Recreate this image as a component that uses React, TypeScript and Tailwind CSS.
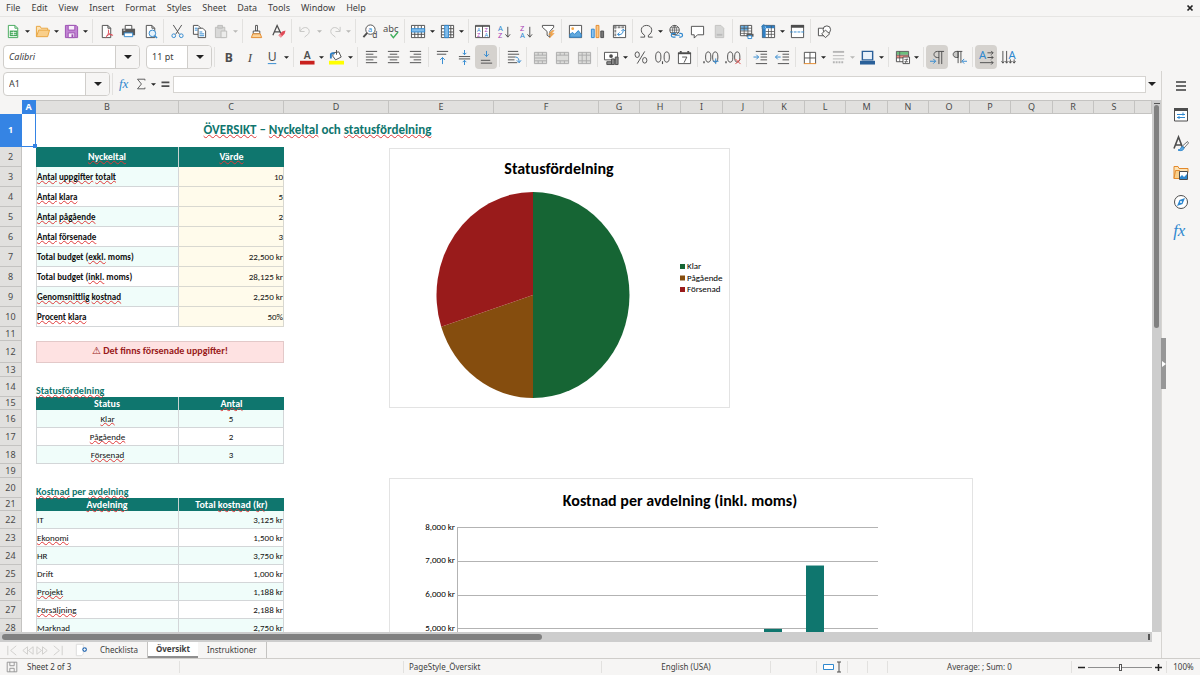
import { Fragment, type ReactNode } from 'react';
import clsx from 'clsx';

const INK = '#4d4d4d';
const BLUE = '#2f88cf';

/* ---------- icons (16 x 16 grid) ---------- */

const page = <path d="M3.5 1.5h6l3 3v10h-9z M9.5 1.5v3h3" fill="#fdfdfd" stroke={INK} />;

const hlines = (rows: number[][], color = INK) => (
  <path d={rows.map(([x1, x2, y]) => `M${x1} ${y}H${x2}`).join(' ')} stroke={color} fill="none" />
);

const icons: Record<string, ReactNode> = {
  new: (
    <>
      <path d="M2.5 1.5h7l3 3v10h-10z" fill="#fff" stroke="#43a85a" />
      <path d="M9.5 1.5v3h3" fill="none" stroke="#43a85a" />
      <path d="M4 7h8v6H4z" fill="#43a85a" />
      <path d="M5 9h6 M5 11h6 M8 8v4" stroke="#fff" strokeWidth=".8" />
    </>
  ),
  open: (
    <>
      <path d="M1.5 13.5v-11h4l1 2h7v3" fill="#fce3b6" stroke="#e8a33d" />
      <path d="M1.5 13.5l2.5-7h11.5l-2 7z" fill="#f9cf8b" stroke="#e8a33d" />
    </>
  ),
  save: (
    <>
      <path d="M1.5 1.5h11.5l1.5 1.5v11.5h-13z" fill="#c283d4" stroke="#9b4fb0" />
      <path d="M4.5 1.5h7v5h-7z" fill="#f7eefa" stroke="#9b4fb0" />
      <path d="M4.5 9.5h7v5h-7z" fill="#f7eefa" stroke="#9b4fb0" />
      <path d="M9 11v3" stroke="#9b4fb0" strokeWidth="2" />
    </>
  ),
  pdf: (
    <>
      {page}
      <path d="M10 6c1 4-1 7-3 8.5M10 9c1 2 3 3 5 3M8 12.5c2-1.5 4-1.5 6-1" fill="none" stroke="#dc4a55" />
    </>
  ),
  print: (
    <>
      <path d="M4.5 5.5v-4h7v4" fill="#fff" stroke={INK} />
      <path d="M1 5h14v7H1z" fill="#5a5a5a" />
      <path d="M3.5 9.5h9v4h-9z" fill="#fff" stroke={BLUE} />
      <path d="M2.5 6.5h2" stroke="#fff" />
    </>
  ),
  preview: (
    <>
      {page}
      <circle cx="10" cy="10" r="3.5" fill="#e6f2fb" stroke={BLUE} />
      <path d="M12.5 12.5l2.5 2.5" stroke={BLUE} strokeWidth="1.5" />
    </>
  ),
  cut: (
    <>
      <path d="M3.5 1l6.5 10M12.5 1L6 11" stroke={INK} fill="none" />
      <circle cx="4" cy="12.5" r="2" fill="none" stroke={BLUE} />
      <circle cx="12" cy="12.5" r="2" fill="none" stroke={BLUE} />
    </>
  ),
  copy: (
    <>
      <path d="M1.5 1.5h5l2.5 2.5v7h-7.5z" fill="#fff" stroke={INK} />
      <path d="M6.5 4.5h5l3 3v7h-8z" fill="#fff" stroke={INK} />
      {hlines([[3, 6, 4.5], [3, 6, 6.5], [8, 11, 8.5], [8, 13, 10.5], [8, 13, 12.5]], BLUE)}
    </>
  ),
  paste: (
    <>
      <path d="M1.5 3.5h10v11h-10z" fill="#d9d9d8" stroke="#bdbdbb" />
      <path d="M4 1.5h5v3H4z" fill="#d0d0cf" stroke="#bdbdbb" />
      <path d="M7.5 7.5h6v7h-6z" fill="#ececeb" stroke="#bdbdbb" />
    </>
  ),
  clone: (
    <>
      <path d="M7 1.5h2v6H7z" fill="#fff" stroke={INK} />
      <path d="M4.5 7.5h7v3h-7z" fill="#fff" stroke={INK} />
      <path d="M4 10.5h8l1.5 4h-11z" fill="#fbd39a" stroke="#e3892b" />
    </>
  ),
  clear: (
    <>
      <path d="M2 12L6.5 1.5 10.5 10M3.5 8.5h6" fill="none" stroke={INK} strokeWidth="1.3" />
      <path d="M8 12l4-4 3.5-1-1 3.5-4 4z" fill="#e14b57" />
      <path d="M8 12l1.5-1.5 2.5 2.5-1.5 1.5z" fill="#f29aa1" />
    </>
  ),
  undo: <path d="M2 3v5h5M2.5 7.5C5 2 12 3 12 8c0 3-3 4-5 6" fill="none" stroke="#c5c5c3" />,
  redo: <path d="M14 3v5H9M13.5 7.5C11 2 4 3 4 8c0 3 3 4 5 6" fill="none" stroke="#c5c5c3" />,
  find: (
    <>
      <circle cx="9" cy="6" r="5" fill="#fff" stroke={INK} />
      <path d="M5.5 9.5L1.5 14" stroke={INK} strokeWidth="2" />
      <text x="6.5" y="8.5" fontSize="8" fill={BLUE}>a</text>
      <text x="11" y="15" fontSize="9" fill={INK}>d</text>
    </>
  ),
  spell: (
    <>
      <text x="-1" y="8" fontSize="10" fill={INK}>abc</text>
      <path d="M7 11l3 3.5 5-6" fill="none" stroke="#3fae5c" strokeWidth="1.5" />
    </>
  ),
  row: (
    <>
      <path d="M.5 1.5h14v13H.5z" fill="#fff" stroke={INK} />
      <path d="M4 2v12M7.5 2v12M11 2v12M1 11h13" stroke={INK} />
      <path d="M.5 5h14v3.5H.5z" fill="#83bdea" stroke={BLUE} />
    </>
  ),
  col: (
    <>
      <path d="M1.5 1.5h13v13h-13z" fill="#fff" stroke={INK} />
      <path d="M2 5h12M2 8.5h12M2 11.5h12M11.5 2v12" stroke={INK} />
      <path d="M5 1.5h4v13H5z" fill="#83bdea" stroke={BLUE} />
    </>
  ),
  sort: (
    <>
      <path d="M.5 1.5h15v13H.5z" fill="#fff" stroke={INK} />
      <path d="M0 2.5h16M8 2v12" stroke={INK} />
      <text x="2" y="8.5" fontSize="6" fill={BLUE}>A</text>
      <text x="2" y="14" fontSize="6" fill="#a63fb5">Z</text>
      <text x="10" y="8.5" fontSize="6" fill="#a63fb5">Z</text>
      <text x="10" y="14" fontSize="6" fill={BLUE}>A</text>
    </>
  ),
  asc: (
    <>
      <text x="1" y="7" fontSize="8" fill={BLUE}>A</text>
      <text x="1" y="15" fontSize="8" fill="#a63fb5">Z</text>
      <path d="M11.5 3v11M9 11l2.5 3 2.5-3" fill="none" stroke={INK} />
    </>
  ),
  desc: (
    <>
      <text x="1" y="7" fontSize="8" fill="#a63fb5">Z</text>
      <text x="1" y="15" fontSize="8" fill={BLUE}>A</text>
      <path d="M11.5 3v11M9 11l2.5 3 2.5-3" fill="none" stroke={INK} />
    </>
  ),
  filter: (
    <>
      <path d="M1.5 1.5h12v2L9.5 8v6l-3-2V8l-5-4.5z" fill="#fff" stroke={INK} />
      <path d="M12 7l-4 4h3l-2 4 5-5h-3l3-3z" fill="#f5a94c" stroke="#e3892b" strokeWidth=".5" />
    </>
  ),
  image: (
    <>
      <path d="M1.5 1.5h13v13h-13z" fill="#fff" stroke={INK} />
      <circle cx="5" cy="5" r="1.5" fill="#f5a94c" />
      <path d="M2 14v-3l3-2 2 2 4-4 3 4v3z" fill="#61a8dc" stroke={BLUE} />
    </>
  ),
  chart: (
    <>
      <path d="M1.5 5.5h3v9h-3z" fill="#8cc3ee" stroke={BLUE} />
      <path d="M6.5 1.5h3v13h-3z" fill="#fbc98a" stroke="#e3892b" />
      <path d="M11.5 7.5h3v7h-3z" fill="#777" stroke={INK} />
    </>
  ),
  pivot: (
    <>
      <path d="M1.5 1.5h13v13h-13z" fill="#fff" stroke={INK} />
      <path d="M2 3.5h12M3.5 2v12" stroke="#8a8a8a" strokeWidth="2" strokeDasharray="3 1" />
      <path d="M6 11c4 1 6-1 6-5M10 7.5l2-2 2 2M8 9l-2 2 2 2" fill="none" stroke={BLUE} />
    </>
  ),
  omega: <path d="M1.5 14h4.500v-2C.5 9 1.5 1.5 8 1.5S15.5 9 10 12v2h4.500" fill="none" stroke={INK} />,
  link: (
    <>
      <circle cx="7" cy="6.5" r="5" fill="#fff" stroke={INK} />
      <path d="M2 6.5h10M7 1.5v10M3 4h8M3 9h8M7 1.5c-3 3-3 7 0 10 3-3 3-7 0-10" fill="none" stroke={INK} strokeWidth=".7" />
      <path d="M8 10H5.5a2 2 0 000 4H8M12 10h1.5a2 2 0 010 4H12M7.5 12h5" fill="none" stroke={BLUE} strokeWidth="1.3" />
    </>
  ),
  comment: <path d="M1.5 2.5h13v9H8L4.5 15v-3.5h-3z" fill="#fff" stroke={INK} />,
  header: (
    <>
      <path d="M3.5 1.5h6l3 3v10h-9z" fill="#d6d6d5" stroke="#c2c2c0" />
      <path d="M5 11.5h6" stroke="#bbb" strokeWidth="2" />
    </>
  ),
  printArea: (
    <>
      <path d="M1.5 1.5h12v11h-12z" fill="#fff" stroke={INK} />
      <path d="M2 2h8v5H2z" fill="#68aee3" />
      <path d="M1.5 4.5h12M1.5 7.5h12M1.5 10h12M5.5 1.5v11M9.5 1.5v11" stroke={INK} strokeWidth=".8" />
      <path d="M8 10.5h7.5v3H8z" fill="#5a5a5a" />
      <path d="M9.5 12.5h4v3h-4z" fill="#fff" stroke={BLUE} />
    </>
  ),
  freeze: (
    <>
      <path d="M1.5 1.5h13v13h-13z" fill="#fff" stroke={INK} />
      <path d="M5 1.5h9.5v3H5zM1.5 4.5H5v10H1.5z" fill="#2f7fc4" />
      <path d="M5 8h9M5 11h9M8 5v9M11 2v12" stroke={INK} strokeWidth=".8" />
      <path d="M3 0v6M0 3h6M1 1l4 4M5 1L1 5" stroke={BLUE} />
    </>
  ),
  split: (
    <>
      <path d="M1.5 1.5h13v13h-13z" fill="#fff" stroke={INK} />
      <path d="M1 2.5h14" stroke={INK} strokeWidth="3" />
      <path d="M0 8.5h16" stroke={BLUE} strokeDasharray="3 1" />
    </>
  ),
  shapes: (
    <>
      <path d="M1.5 4.5h7v8h-7z" fill="#fff" stroke={INK} />
      <circle cx="10.5" cy="6" r="4" fill="#fff" stroke={INK} />
      <path d="M9 6.5l4.5 4L9 14.5 5 10.5z" fill="#f5f4f2" stroke={INK} />
    </>
  ),
  bold: <text x="4" y="13" fontSize="13" fontWeight="700" fill={INK}>B</text>,
  italic: <text x="5" y="13" fontSize="14" fontStyle="italic" fontFamily="Liberation Serif" fill={INK}>I</text>,
  underline: (
    <>
      <text x="3" y="12" fontSize="13" fill={INK}>U</text>
      <path d="M3 14.5h9" stroke={BLUE} />
    </>
  ),
  fontColor: (
    <>
      <text x="4" y="10" fontSize="11" fontWeight="600" fill={INK}>A</text>
      <path d="M0 13.5h15.5" stroke="#c9211e" strokeWidth="4" />
    </>
  ),
  highlight: (
    <>
      <path d="M4.5 3l6-1 2.5 5.5-6 3-3-4z" fill="#fff" stroke={INK} />
      <path d="M2 9V4.5c1-2 3-1 4-.5" fill="none" stroke="#2f7fc4" strokeWidth="2" />
      <path d="M8 0v5" stroke={INK} />
      <path d="M0 13.5h16" stroke="#ff0" strokeWidth="4" />
    </>
  ),
  alignL: hlines([[2, 14, 1.5], [2, 10, 4.5], [2, 14, 7.5], [2, 10, 10.5], [2, 14, 13.5]]),
  alignC: hlines([[2, 14, 1.5], [4, 12, 4.5], [2, 14, 7.5], [4, 12, 10.5], [2, 14, 13.5]]),
  alignR: hlines([[2, 14, 1.5], [6, 14, 4.5], [2, 14, 7.5], [6, 14, 10.5], [2, 14, 13.5]]),
  top: (
    <>
      {hlines([[2, 14, 1.5], [2, 12, 4.5]])}
      <path d="M8 15V8M5.5 10.5L8 8l2.5 2.5" fill="none" stroke={BLUE} />
    </>
  ),
  middle: (
    <>
      {hlines([[2, 14, 7], [2, 14, 9.5]])}
      <path d="M8 0v5M6 3l2 2 2-2M8 16v-5M6 13l2-2 2 2" fill="none" stroke={BLUE} />
    </>
  ),
  bottom: (
    <>
      {hlines([[2, 12, 11], [2, 14, 14]])}
      <path d="M8 1v6M5.5 4.5L8 7l2.5-2.5" fill="none" stroke={BLUE} />
    </>
  ),
  wrap: (
    <>
      {hlines([[2, 13, 1.5], [2, 14, 4.5], [2, 10, 7.5], [2, 9, 10.5], [2, 12, 13.5]])}
      <path d="M10 7.5c3 0 4 2 4 6M11.5 11l2.5 2.5 2-2.5" fill="none" stroke={BLUE} />
    </>
  ),
  merge: (
    <>
      <path d="M1.5 2.5h13v12h-13z" fill="#dcdcda" stroke="#ababab" />
      <path d="M1.5 5.5h13M1.5 11.5h13M5.5 2.5v3M10 2.5v3M5.5 11.5v3M10 11.5v3M1.5 8.5h13" stroke="#ababab" />
    </>
  ),
  mergeOne: (
    <>
      <path d="M1.5 2.5h13v12h-13z" fill="#dcdcda" stroke="#ababab" />
      <path d="M1.5 5.5h13M1.5 11.5h13M5.5 2.5v3M10 2.5v3M5.5 11.5v3M10 11.5v3" stroke="#ababab" />
    </>
  ),
  unmerge: (
    <>
      <path d="M1.5 2.5h13v12h-13z" fill="#dcdcda" stroke="#ababab" />
      <path d="M1.5 5.5h13M1.5 11.5h13M5.5 2.5v12M10 2.5v12" stroke="#ababab" />
    </>
  ),
  currency: (
    <>
      <path d="M.5 2.5h14v8H.5z" fill="#fff" stroke={INK} />
      <circle cx="7.5" cy="6.5" r="2" fill={INK} />
      <path d="M3 12.5h5v3H3zM8 9.5h3v6H8zM12 7.5h3v8h-3z" fill="#8c8c8c" stroke={INK} />
    </>
  ),
  percent: (
    <>
      <ellipse cx="4.5" cy="5" rx="2.3" ry="3" fill="none" stroke={INK} />
      <ellipse cx="12.5" cy="11" rx="2.3" ry="3" fill="none" stroke={INK} />
      <path d="M12.5 1.5l-8 13" stroke={INK} />
    </>
  ),
  number: (
    <>
      <ellipse cx="3.5" cy="7.5" rx="2.8" ry="5.5" fill="none" stroke={INK} />
      <ellipse cx="12.5" cy="7.5" rx="2.8" ry="5.5" fill="none" stroke={INK} />
      <path d="M8 12v3" stroke={INK} strokeWidth="1.2" />
    </>
  ),
  date: (
    <>
      <path d="M1.5 3.5h13v11h-13z" fill="#fff" stroke={INK} />
      <path d="M1 3.5h14" stroke={INK} strokeWidth="2" />
      <path d="M4 1v2M12 1v2" stroke={INK} strokeWidth="2" />
      <path d="M5.5 7.5h5l-3 6" fill="none" stroke={INK} />
    </>
  ),
  addDec: (
    <>
      <path d="M0 12v2" stroke={INK} strokeWidth="1.5" />
      <ellipse cx="4.5" cy="7.5" rx="2.8" ry="5.5" fill="none" stroke={INK} />
      <ellipse cx="12" cy="7.5" rx="2.8" ry="5.5" fill="none" stroke={INK} />
      <path d="M12.5 9v6M9.5 12h6" stroke={BLUE} />
    </>
  ),
  delDec: (
    <>
      <path d="M0 12v2" stroke={INK} strokeWidth="1.5" />
      <ellipse cx="4.5" cy="7.5" rx="2.8" ry="5.5" fill="none" stroke={INK} />
      <ellipse cx="12" cy="7.5" rx="2.8" ry="5.5" fill="none" stroke={INK} />
      <path d="M10 9.5l5.5 5.5M15.5 9.5L10 15" stroke="#e04848" />
    </>
  ),
  indent: (
    <>
      {hlines([[3, 15, 1.5], [8, 15, 4.5], [8, 15, 7.5], [8, 15, 10.5], [3, 15, 14.5]])}
      <path d="M.5 7.5h5.5M3.5 5L6 7.5 3.5 10" fill="none" stroke={BLUE} />
    </>
  ),
  outdent: (
    <>
      {hlines([[3, 15, 1.5], [8, 15, 4.5], [8, 15, 7.5], [8, 15, 10.5], [3, 15, 14.5]])}
      <path d="M6 7.5H.5M3 5L.5 7.5 3 10" fill="none" stroke={BLUE} />
    </>
  ),
  borders: (
    <>
      <path d="M2.5 14.5v-12h12v12M8.5 2.5v12M2.5 8.5h12" fill="#fff" stroke={INK} />
      <path d="M2 14.5h13" stroke="#e3892b" />
    </>
  ),
  lineStyle: (
    <>
      <path d="M2 2h12" stroke="#b5b5b5" strokeWidth="2" />
      <path d="M2 6h12M2 9.5h12" stroke="#b5b5b5" />
      <path d="M2 13h12" stroke="#b5b5b5" strokeDasharray="2 1" strokeWidth="2" />
    </>
  ),
  borderColor: (
    <>
      <path d="M2.5 1.5h11v9h-11z" fill="#e8f1fa" stroke="#2a6099" strokeWidth="1.5" />
      <path d="M0 13.5h16" stroke="#2a6099" strokeWidth="4" />
    </>
  ),
  conditional: (
    <>
      <path d="M1.5 1.5h13v11h-13z" fill="#fff" stroke={INK} />
      <path d="M2 2h12v3H2z" fill="#6bbf7c" />
      <path d="M2 5.5h12v3H2z" fill="#ef8b82" />
      <path d="M1.5 5.5h13M1.5 8.5h13M5 1.5v11" stroke={INK} strokeWidth=".8" />
      <path d="M8.5 7.5h7v7h-7z" fill="#fff" stroke={INK} />
      <path d="M10 10h4M10 12.5h4M13 9l-2 5" stroke={INK} strokeWidth=".8" />
    </>
  ),
  ltr: (
    <>
      <path d="M9.5 15V1.5M12.5 15V1.5M15 1.5H8C3 1.5 3 8 8 8h1.5" fill="none" stroke={INK} />
      <path d="M0 12h6M3.5 9.5L6 12l-2.5 2.5" fill="none" stroke={BLUE} />
    </>
  ),
  rtl: (
    <>
      <path d="M6.5 1.5H5C0 1.5 0 8 5 8h1.5z" fill="#c9c9c7" stroke={INK} />
      <path d="M6.5 14V1.5M9.5 14V1.5M5 1.5h6" fill="none" stroke={INK} />
      <path d="M16 12h-5M13 9.5L10.5 12l2.5 2.5" fill="none" stroke={BLUE} />
    </>
  ),
  textLR: (
    <>
      <text x="0" y="10" fontSize="12" fill={BLUE}>A</text>
      <path d="M9 3h6M9 8h6M1 13.5h14M13 1l2 2-2 2M13 6l2 2-2 2M13 11.5l2 2-2 2" fill="none" stroke={INK} />
    </>
  ),
  textTB: (
    <>
      <path d="M2 1v13M6 1v13M10 10v4M14 10v4M.5 12L2 14l1.5-2M4.5 12L6 14l1.5-2M8.5 12l1.5 2 1.5-2M12.5 12l1.5 2 1.5-2" fill="none" stroke={INK} />
      <text x="8" y="10" fontSize="12" fill={BLUE}>A</text>
    </>
  ),
  fx: <text x="1" y="12.5" fontSize="15" fontStyle="italic" fontFamily="Liberation Serif" fill={BLUE}>fx</text>,
  sum: <path d="M12.5 4V2.5H4L8.5 8 4 13.5h8.5V12" fill="none" stroke={INK} />,
  equals: <path d="M4 6h9M4 10.5h9" stroke={INK} strokeWidth="2" />,
  menu: <path d="M3 4h10M3 8h10M3 12h10" stroke="#3d3d3d" strokeWidth="1.5" />,
  properties: (
    <>
      <path d="M1.5 2h13v12h-13z" fill="#fff" stroke={INK} />
      <path d="M1 2.5h14" stroke={INK} strokeWidth="3" />
      <path d="M4 7.5h8M4 10.5h8M10 5.5v3M6 9v3" stroke={BLUE} />
    </>
  ),
  styles: (
    <>
      <path d="M1 12.5L5.5 1 9.5 11.5M2.5 9h6" fill="none" stroke={INK} strokeWidth="1.6" />
      <path d="M9.5 10l5-4.5L15.5 7 11 12z" fill="#fff" stroke={INK} strokeWidth=".8" />
      <path d="M5 14c3 0 2-3 5-3.5l1 1.5c0 2-3 3.5-6 2z" fill="#61a8dc" stroke={BLUE} />
    </>
  ),
  gallery: (
    <>
      <path d="M1 13.5v-12h4l1 2h9v4" fill="#fce3b6" stroke="#e3892b" />
      <path d="M1 13.5l1.5-8h4v8z" fill="#f9cf8b" stroke="#e3892b" />
      <path d="M6.5 6.5h8v8h-8z" fill="#fff" stroke={INK} />
      <path d="M7 14v-2l2-2 2 2 3-3v5z" fill={BLUE} />
    </>
  ),
  navigator: (
    <>
      <circle cx="8" cy="8" r="6.5" fill="#fff" stroke={INK} />
      <path d="M12 4l-2.5 6L4 12l2.5-6z" fill={BLUE} />
      <circle cx="8" cy="8" r="1" fill="#fff" />
    </>
  ),
  addSheet: (
    <>
      <path d="M1.5 1.5h8v11l-2 2h-6z" fill="#fff" stroke="#dadada" />
      <circle cx="11" cy="7.5" r="2.7" fill="#2f6fb5" />
      <path d="M9.5 7.5h3M11 6v3" stroke="#fff" />
    </>
  ),
  docSaved: (
    <>
      <path d="M2.5 2.5h11v11h-11z" fill="none" stroke="#8f8f8f" />
      <path d="M5.5 2.5v4h5v-4M5.5 13.5v-4h5v4" fill="none" stroke="#8f8f8f" />
    </>
  ),
};

function Icon({ name, className }: { name: string; className?: string }) {
  return (
    <svg viewBox="0 0 16 16" className={clsx('shrink-0 overflow-visible', className ?? 'size-4')} aria-hidden="true">
      {icons[name]}
    </svg>
  );
}

function Caret({ dim, large }: { dim?: boolean; large?: boolean }) {
  return (
    <svg viewBox="0 0 8 4" className={clsx('shrink-0', large ? 'h-1 w-2' : 'h-[3px] w-[5px]')} aria-hidden="true">
      <path d="M0 0h8L4 4z" fill={dim ? '#b9b9b7' : '#222'} />
    </svg>
  );
}

/* ---------- toolbars ---------- */

type Tool = { icon: string; label: string; menu?: boolean; dim?: boolean; active?: boolean };

const standardTools: Tool[][] = [
  [
    { icon: 'new', label: 'New', menu: true },
    { icon: 'open', label: 'Open', menu: true },
    { icon: 'save', label: 'Save', menu: true },
  ],
  [
    { icon: 'pdf', label: 'Export as PDF' },
    { icon: 'print', label: 'Print' },
    { icon: 'preview', label: 'Print preview' },
  ],
  [
    { icon: 'cut', label: 'Cut' },
    { icon: 'copy', label: 'Copy' },
    { icon: 'paste', label: 'Paste', menu: true, dim: true },
  ],
  [
    { icon: 'clone', label: 'Clone formatting' },
    { icon: 'clear', label: 'Clear formatting' },
  ],
  [
    { icon: 'undo', label: 'Undo', menu: true, dim: true },
    { icon: 'redo', label: 'Redo', menu: true, dim: true },
  ],
  [
    { icon: 'find', label: 'Find and replace' },
    { icon: 'spell', label: 'Spelling' },
  ],
  [
    { icon: 'row', label: 'Row', menu: true },
    { icon: 'col', label: 'Column', menu: true },
  ],
  [
    { icon: 'sort', label: 'Sort' },
    { icon: 'asc', label: 'Sort ascending' },
    { icon: 'desc', label: 'Sort descending' },
    { icon: 'filter', label: 'AutoFilter' },
  ],
  [
    { icon: 'image', label: 'Insert image' },
    { icon: 'chart', label: 'Insert chart' },
    { icon: 'pivot', label: 'Pivot table' },
  ],
  [
    { icon: 'omega', label: 'Special character', menu: true },
    { icon: 'link', label: 'Hyperlink' },
    { icon: 'comment', label: 'Comment' },
    { icon: 'header', label: 'Headers and footers', dim: true },
  ],
  [
    { icon: 'printArea', label: 'Print area' },
    { icon: 'freeze', label: 'Freeze panes', menu: true },
    { icon: 'split', label: 'Split window' },
  ],
  [{ icon: 'shapes', label: 'Draw functions' }],
];

const formattingTools: Tool[][] = [
  [
    { icon: 'bold', label: 'Bold' },
    { icon: 'italic', label: 'Italic' },
    { icon: 'underline', label: 'Underline', menu: true },
  ],
  [
    { icon: 'fontColor', label: 'Font color', menu: true },
    { icon: 'highlight', label: 'Background color', menu: true },
  ],
  [
    { icon: 'alignL', label: 'Align left' },
    { icon: 'alignC', label: 'Center' },
    { icon: 'alignR', label: 'Align right' },
  ],
  [
    { icon: 'top', label: 'Align top' },
    { icon: 'middle', label: 'Center vertically' },
    { icon: 'bottom', label: 'Align bottom', active: true },
  ],
  [{ icon: 'wrap', label: 'Wrap text' }],
  [
    { icon: 'merge', label: 'Merge and center', dim: true },
    { icon: 'mergeOne', label: 'Merge cells', dim: true },
    { icon: 'unmerge', label: 'Unmerge cells', dim: true },
  ],
  [
    { icon: 'currency', label: 'Currency', menu: true },
    { icon: 'percent', label: 'Percent' },
    { icon: 'number', label: 'Number' },
    { icon: 'date', label: 'Date' },
  ],
  [
    { icon: 'addDec', label: 'Add decimal' },
    { icon: 'delDec', label: 'Delete decimal' },
  ],
  [
    { icon: 'indent', label: 'Increase indent' },
    { icon: 'outdent', label: 'Decrease indent' },
  ],
  [
    { icon: 'borders', label: 'Borders', menu: true },
    { icon: 'lineStyle', label: 'Border style', menu: true, dim: true },
    { icon: 'borderColor', label: 'Border color', menu: true },
  ],
  [{ icon: 'conditional', label: 'Conditional formatting', menu: true }],
  [
    { icon: 'ltr', label: 'Left-to-right', active: true },
    { icon: 'rtl', label: 'Right-to-left' },
  ],
  [
    { icon: 'textLR', label: 'Text direction left to right', active: true },
    { icon: 'textTB', label: 'Text direction top to bottom' },
  ],
];

function Divider() {
  return (
    <div className="flex w-[5px] shrink-0 justify-center self-stretch py-0.5">
      <div className="w-px bg-[#e2e1df]" />
    </div>
  );
}

function ToolGroups({ groups }: { groups: Tool[][] }) {
  return (
    <>
      {groups.map((group, i) => (
        <Fragment key={i}>
          {i > 0 && <Divider />}
          <div className={clsx('flex items-center', group[group.length - 1].menu && 'pr-px')}>
            {group.map((tool) => (
              <Fragment key={tool.icon}>
                <button
                  type="button"
                  aria-label={tool.label}
                  className={clsx('flex h-6 w-[22px] items-center justify-center rounded-sm', tool.active && 'bg-[#d5d2ce]')}
                >
                  <Icon name={tool.icon} className="size-[15px]" />
                </button>
                {tool.menu && (
                  <button type="button" aria-label={`${tool.label} options`} className="flex h-6 w-[7px] items-center justify-center">
                    <Caret dim={tool.dim} />
                  </button>
                )}
              </Fragment>
            ))}
          </div>
        </Fragment>
      ))}
    </>
  );
}

function ComboBox({ label, value, className, inputClass }: { label: string; value: string; className: string; inputClass?: string }) {
  return (
    <div className={clsx('flex h-6 shrink-0 overflow-hidden rounded border border-[#d0cecb] bg-white', className)}>
      <input
        aria-label={label}
        defaultValue={value}
        className={clsx('min-w-0 flex-1 bg-transparent px-[5px] outline-none', inputClass)}
      />
      <button type="button" aria-label={`${label} list`} className="flex w-6 items-center justify-center border-l border-[#d0cecb] bg-[#f6f5f4]">
        <Caret large />
      </button>
    </div>
  );
}

/* ---------- sheet ---------- */

const columns = [
  { name: 'A', width: 'w-[14px]' },
  { name: 'B', width: 'w-[143px]' },
  { name: 'C', width: 'w-[105px]' },
  { name: 'D', width: 'w-[105px]' },
  { name: 'E', width: 'w-[105px]' },
  { name: 'F', width: 'w-[105px]' },
  { name: 'G', width: 'w-[41px]' },
  { name: 'H', width: 'w-[41px]' },
  { name: 'I', width: 'w-[42px]' },
  { name: 'J', width: 'w-[41px]' },
  { name: 'K', width: 'w-[41px]' },
  { name: 'L', width: 'w-[41px]' },
  { name: 'M', width: 'w-[42px]' },
  { name: 'N', width: 'w-[41px]' },
  { name: 'O', width: 'w-[41px]' },
  { name: 'P', width: 'w-[41px]' },
  { name: 'Q', width: 'w-[42px]' },
  { name: 'R', width: 'w-[41px]' },
  { name: 'S', width: 'w-[41px]' },
  { name: '', width: '' },
];

type Row = { kind: 'title' | 'head' | 'key' | 'alert' | 'section' | 'center' | 'cost' | 'gap'; h: string; b?: string; c?: string };

// Words between tildes get the spell checker's underline
const rows: Row[] = [
  { kind: 'title', h: 'h-[33px]', b: '~ÖVERSIKT~ – ~Nyckeltal~ och ~statusfördelning~' },
  { kind: 'head', h: 'h-5', b: '~Nyckeltal~', c: '~Värde~' },
  { kind: 'key', h: 'h-5', b: '~Antal~ ~uppgifter~ ~totalt~', c: '10' },
  { kind: 'key', h: 'h-5', b: '~Antal~ ~klara~', c: '5' },
  { kind: 'key', h: 'h-5', b: '~Antal~ ~pågående~', c: '2' },
  { kind: 'key', h: 'h-5', b: '~Antal~ ~försenade~', c: '3' },
  { kind: 'key', h: 'h-5', b: 'Total budget (~exkl.~ moms)', c: '22,500 kr' },
  { kind: 'key', h: 'h-5', b: 'Total budget (~inkl.~ moms)', c: '28,125 kr' },
  { kind: 'key', h: 'h-5', b: '~Genomsnittlig~ ~kostnad~', c: '2,250 kr' },
  { kind: 'key', h: 'h-5', b: '~Procent~ ~klara~', c: '50%' },
  { kind: 'gap', h: 'h-[14px]' },
  { kind: 'alert', h: 'h-[22px]', b: 'Det finns försenade uppgifter!' },
  { kind: 'gap', h: 'h-[14px]' },
  { kind: 'section', h: 'h-5', b: '~Statusfördelning~' },
  { kind: 'head', h: 'h-[13px]', b: 'Status', c: '~Antal~' },
  { kind: 'center', h: 'h-[18px]', b: '~Klar~', c: '5' },
  { kind: 'center', h: 'h-[18px]', b: '~Pågående~', c: '2' },
  { kind: 'center', h: 'h-[18px]', b: '~Försenad~', c: '3' },
  { kind: 'gap', h: 'h-[14px]' },
  { kind: 'section', h: 'h-5', b: '~Kostnad~ per ~avdelning~' },
  { kind: 'head', h: 'h-[13px]', b: '~Avdelning~', c: 'Total ~kostnad~ (~kr~)' },
  { kind: 'cost', h: 'h-[18px]', b: 'IT', c: '3,125 kr' },
  { kind: 'cost', h: 'h-[18px]', b: '~Ekonomi~', c: '1,500 kr' },
  { kind: 'cost', h: 'h-[18px]', b: 'HR', c: '3,750 kr' },
  { kind: 'cost', h: 'h-[18px]', b: 'Drift', c: '1,000 kr' },
  { kind: 'cost', h: 'h-[18px]', b: '~Projekt~', c: '1,188 kr' },
  { kind: 'cost', h: 'h-[18px]', b: '~Försäljning~', c: '2,188 kr' },
  { kind: 'cost', h: 'h-[18px]', b: '~Marknad~', c: '2,750 kr' },
];

function Spelled({ text }: { text: string }) {
  return (
    <>
      {text.split('~').map((part, i) =>
        i % 2 ? (
          <span key={i} className="underline decoration-[#e03a3a] decoration-wavy decoration-1 underline-offset-0 [text-decoration-skip-ink:none]">
            {part}
          </span>
        ) : (
          part
        )
      )}
    </>
  );
}

function RowCells({ row, index }: { row: Row; index: number }) {
  const { kind, b = '', c = '' } = row;
  const tint = index % 2 === (kind === 'key' ? 0 : 1) ? 'bg-[#f0fdfa]' : 'bg-white';

  switch (kind) {
    case 'title':
      return (
        <td colSpan={5} className="p-0 pb-0.5 text-center text-[13px] font-bold text-[#0f766e]">
          <Spelled text={b} />
        </td>
      );
    case 'alert':
      return (
        <td colSpan={2} className="border border-[#e3c9c9] bg-[#fee2e2] p-0 pb-0.5 text-center text-[10px] font-bold text-[#991b1b]">
          <span className="font-['DejaVu_Sans',sans-serif] font-normal">⚠</span> {b}
        </td>
      );
    case 'section':
      return (
        <td colSpan={2} className="p-0 align-bottom text-[10px] font-bold text-[#0f766e]">
          <Spelled text={b} />
        </td>
      );
    case 'head':
      return (
        <>
          <th scope="col" className="border-r border-[#c9d3d1] bg-[#0f766e] p-0 text-[10px] font-bold text-white">
            <Spelled text={b} />
          </th>
          <th scope="col" className="bg-[#0f766e] p-0 text-[10px] font-bold text-white">
            <Spelled text={c} />
          </th>
        </>
      );
    case 'key':
      return (
        <>
          <td className={clsx('border-r border-b border-l border-[#d3d6d8] p-0 font-bold', tint)}>
            <Spelled text={b} />
          </td>
          <td className="border-r border-b border-[#d9d8d0] bg-[#fffbeb] p-0 text-right">{c}</td>
        </>
      );
    case 'center':
    case 'cost':
      return (
        <>
          <td className={clsx('border-r border-b border-l border-[#d3d6d8] p-0', kind === 'center' && 'text-center', tint)}>
            <Spelled text={b} />
          </td>
          <td className={clsx('border-r border-b border-[#d3d6d8] p-0', kind === 'center' ? 'text-center' : 'text-right', tint)}>
            {c}
          </td>
        </>
      );
    default:
      return null;
  }
}

function Sheet() {
  return (
    <table className="w-full table-fixed border-separate border-spacing-0 font-[Carlito,Lato,sans-serif] text-[9px] leading-[12px] text-[#111]">
      <colgroup>
        <col className="w-[22px]" />
        {columns.map((col, i) => (
          <col key={i} className={col.width} />
        ))}
      </colgroup>
      <thead className="font-['Noto_Sans',sans-serif]">
        <tr className="h-[14px]">
          <td className="bg-[#f6f5f4] p-0" />
          {columns.map((col, i) => (
            <th
              key={i}
              scope="col"
              className={clsx(
                'border-t border-r border-b p-0',
                i === 0 ? 'border-[#3584e4] bg-[#3584e4] font-bold text-white' : 'border-[#c4c3c1] bg-[#e1e0de] font-normal text-[#4a4a4a]'
              )}
            >
              {col.name}
            </th>
          ))}
        </tr>
      </thead>
      <tbody>
        {rows.map((row, i) => (
          <tr key={i} className={row.h}>
            <th
              scope="row"
              className={clsx(
                "border-r border-b p-0 font-['Noto_Sans',sans-serif]",
                i === 0 ? 'border-[#3584e4] bg-[#3584e4] font-bold text-white' : 'border-[#c4c3c1] bg-[#e1e0de] font-normal text-[#4a4a4a]'
              )}
            >
              {i + 1}
            </th>
            {i === 0 ? (
              <td className="relative border-r border-b border-[#3584e4] p-0">
                <span className="absolute -right-0.5 -bottom-0.5 size-1 bg-[#3584e4]" />
              </td>
            ) : (
              <td className="p-0" />
            )}
            <RowCells row={row} index={i} />
          </tr>
        ))}
      </tbody>
    </table>
  );
}

/* ---------- charts ---------- */

const statusData = [
  { name: 'Klar', value: 5, color: '#166534' },
  { name: 'Pågående', value: 2, color: '#854d0e' },
  { name: 'Försenad', value: 3, color: '#991b1b' },
];

function StatusChart() {
  const total = statusData.reduce((sum, d) => sum + d.value, 0);
  const point = (share: number) => {
    const a = share * Math.PI * 2;
    return `${144 + 96.5 * Math.sin(a)} ${147 - 103 * Math.cos(a)}`;
  };
  let start = 0;

  return (
    <svg width="341" height="260" viewBox="0 0 341 260" role="img" aria-label="Statusfördelning" className="block font-[Carlito,Lato,sans-serif]">
      <rect x=".5" y=".5" width="340" height="259" fill="#fff" stroke="#e3e3e3" />
      <text x="170" y="26" textAnchor="middle" fontSize="16" fontWeight="700">Statusfördelning</text>
      {statusData.map((d) => {
        const from = start;
        start += d.value / total;
        return <path key={d.name} d={`M144 147L${point(from)}A96.5 103 0 0 1 ${point(start)}Z`} fill={d.color} />;
      })}
      {statusData.map((d, i) => (
        <g key={d.name}>
          <rect x="291" y={116 + i * 11.5} width="5" height="5" fill={d.color} />
          <text x="298" y={121 + i * 11.5} fontSize="9">{d.name}</text>
        </g>
      ))}
    </svg>
  );
}

const costBars = [
  { x: 375, value: 5000 },
  { x: 417, value: 6875 },
];

function CostChart() {
  const y = (value: number) => 49.5 + (8000 - value) * 0.0338;

  return (
    <svg width="584" height="340" viewBox="0 0 584 340" role="img" aria-label="Kostnad per avdelning" className="block font-[Carlito,Lato,sans-serif]">
      <rect x=".5" y=".5" width="583" height="339" fill="#fff" stroke="#e3e3e3" />
      <text x="291" y="28" textAnchor="middle" fontSize="16" fontWeight="700">Kostnad per avdelning (inkl. moms)</text>
      {[8000, 7000, 6000, 5000].map((tick) => (
        <g key={tick}>
          <path d={`M68 ${Math.floor(y(tick)) + 0.5}H489`} stroke="#b3b3b3" />
          <text x="66" y={y(tick) + 2} textAnchor="end" fontSize="9">{`${tick.toLocaleString('en-US')} kr`}</text>
        </g>
      ))}
      <path d="M68.5 49v280" stroke="#b3b3b3" />
      {costBars.map((bar) => (
        <rect key={bar.x} x={bar.x} y={y(bar.value)} width="18" height={320 - y(bar.value)} fill="#0f766e" />
      ))}
    </svg>
  );
}

/* ---------- page ---------- */

const menus = ['File', 'Edit', 'View', 'Insert', 'Format', 'Styles', 'Sheet', 'Data', 'Tools', 'Window', 'Help'];

const sidebarItems = [
  { icon: 'properties', label: 'Properties' },
  { icon: 'styles', label: 'Styles' },
  { icon: 'gallery', label: 'Gallery' },
  { icon: 'navigator', label: 'Navigator' },
  { icon: 'fx', label: 'Functions' },
];

const tabArrows = [
  { label: 'First sheet', d: 'M3 3v10M12 3L6 8l6 5' },
  { label: 'Previous sheet', d: 'M8 4L3 8l5 4zM14 4L9 8l5 4z' },
  { label: 'Next sheet', d: 'M2 4l5 4-5 4zM8 4l5 4-5 4z' },
  { label: 'Last sheet', d: 'M13 3v10M4 3l6 5-6 5' },
];

export default function App() {
  return (
    <div className="flex h-screen flex-col overflow-hidden bg-[#f6f5f4] font-['Noto_Sans',sans-serif] text-[9px] leading-[12px] text-[#3d3d3d]">
      {/* Menu bar */}
      <nav className="flex h-[17px] shrink-0 items-center gap-[11px] border-b border-[#e6e5e3] px-1.5">
        {menus.map((item) => (
          <button key={item} type="button">
            {item}
          </button>
        ))}
        <button type="button" aria-label="Close document" className="ml-auto">
          <svg viewBox="0 0 8 8" className="size-2">
            <path d="M1.5 1.5l5 5M6.5 1.5l-5 5" stroke="#222" strokeWidth="1.7" />
          </svg>
        </button>
      </nav>

      {/* Toolbars */}
      <div className="flex h-7 shrink-0 items-center pl-0.5">
        <ToolGroups groups={standardTools} />
      </div>
      <div className="mb-0.5 flex h-6 shrink-0 items-center pl-[3px]">
        <ComboBox label="Font name" value="Calibri" className="w-[137px]" inputClass="italic" />
        <ComboBox label="Font size" value="11 pt" className="ml-1.5 w-[66px]" />
        <Divider />
        <ToolGroups groups={formattingTools} />
      </div>

      <div className="flex min-h-0 flex-1">
        <main className="flex min-w-0 flex-1 flex-col">
          {/* Formula bar */}
          <div className="flex h-[29px] shrink-0 items-center pb-[3px] pl-[3px]">
            <ComboBox label="Name box" value="A1" className="w-[107px]" />
            <Divider />
            <button type="button" aria-label="Function wizard" className="ml-0.5 flex w-4 justify-center">
              <Icon name="fx" className="size-[14px]" />
            </button>
            <button type="button" aria-label="Select function" className="flex w-4 justify-center">
              <Icon name="sum" className="size-[14px]" />
            </button>
            <button type="button" aria-label="Function list" className="flex w-2 justify-center">
              <Caret />
            </button>
            <button type="button" aria-label="Formula" className="flex w-4 justify-center">
              <Icon name="equals" className="size-[14px]" />
            </button>
            <input aria-label="Formula input" className="h-[17px] min-w-0 flex-1 border border-[#d6d4d1] bg-white px-1 outline-none" />
            <button type="button" aria-label="Expand formula bar" className="mr-[5px] ml-0.5 flex w-2 justify-center">
              <Caret large />
            </button>
          </div>

          <div className="flex min-h-0 flex-1">
            <div className="flex min-w-0 flex-1 flex-col">
              <div className="relative min-h-0 flex-1 overflow-hidden bg-white">
                <Sheet />
                <div className="absolute top-12 left-[389px]">
                  <StatusChart />
                </div>
                <div className="absolute top-[378px] left-[389px]">
                  <CostChart />
                </div>
              </div>
              <div className="flex h-2.5 shrink-0 items-center justify-between bg-[#cdcdcd] px-0.5">
                <div className="h-1.5 w-[47%] rounded-full bg-[#808080]" />
                <div className="h-1.5 w-0.5 bg-[#555]" />
              </div>
            </div>
            <div className="mb-2.5 flex w-[9px] shrink-0 flex-col items-center bg-[#cdcdcd]">
              <div className="h-1 w-1.5 border-b border-[#555]" />
              <div className="mt-px h-[42%] w-[5px] rounded-full bg-[#808080]" />
            </div>
          </div>

          {/* Sheet tabs */}
          <div className="flex h-4 shrink-0 items-stretch text-[8px]">
            <div className="flex items-center pl-[5px]">
              {tabArrows.map((arrow) => (
                <button key={arrow.label} type="button" aria-label={arrow.label} className="flex w-[15px] justify-center">
                  <svg viewBox="0 0 16 16" className="size-[15px]">
                    <path d={arrow.d} fill="none" stroke="#cfcecc" />
                  </svg>
                </button>
              ))}
            </div>
            <button type="button" aria-label="Add sheet" className="ml-2 flex w-[18px] items-center justify-center">
              <Icon name="addSheet" className="size-[14px]" />
            </button>
            <button type="button" className="border-r border-[#c4c3c1] px-[9px]">Checklista</button>
            <button type="button" className="border-b-2 border-[#8f8f8f] bg-white px-2 font-bold">Översikt</button>
            <button type="button" className="border-r border-[#c4c3c1] px-[9px]">Instruktioner</button>
          </div>
        </main>

        {/* Sidebar */}
        <aside className="relative flex w-[39px] shrink-0 flex-col items-center border-l border-[#d6d4d1]">
          <button type="button" aria-label="Sidebar settings" className="flex h-[29px] w-6 items-center justify-center">
            <Icon name="menu" />
          </button>
          {sidebarItems.map((item) => (
            <button key={item.icon} type="button" aria-label={item.label} className="flex h-[29px] w-6 items-center justify-center">
              <Icon name={item.icon} className={item.icon === 'fx' ? 'size-[18px]' : 'size-4'} />
            </button>
          ))}
          <button
            type="button"
            aria-label="Hide sidebar"
            className="absolute top-[267px] -left-px flex h-[51px] w-[5px] items-center justify-center bg-[#979797]"
          >
            <svg viewBox="0 0 4 6" className="h-1.5 w-1">
              <path d="M0 0l4 3-4 3z" fill="#fff" />
            </svg>
          </button>
        </aside>
      </div>

      {/* Status bar */}
      <footer className="flex h-[17px] shrink-0 items-center border-t border-[#cfcdca] text-[8px] *:flex *:h-3 *:shrink-0 *:items-center">
        <div className="w-[180px] gap-2 border-r border-[#e2e1df] pl-[5px]">
          <Icon name="docSaved" className="size-[14px]" />
          Sheet 2 of 3
        </div>
        <div className="w-[224px] border-r border-[#e2e1df]" />
        <div className="w-[198px] border-r border-[#e2e1df] pl-[5px]">PageStyle_Översikt</div>
        <div className="w-[169px] justify-center border-r border-[#e2e1df]">English (USA)</div>
        <div className="w-[46px] border-r border-[#e2e1df]" />
        <div className="w-[31px] justify-center border-r border-[#e2e1df]">
          <svg viewBox="0 0 20 12" className="h-3 w-5">
            <path d="M1.5 3.5h10v5h-10z" fill="#fff" stroke={BLUE} />
            <path d="M17 1v10M15 1h4M15 11h4" stroke={INK} />
          </svg>
        </div>
        <div className="w-5 border-r border-[#e2e1df]" />
        <div className="w-5 border-r border-[#e2e1df]" />
        <div className="flex-1 justify-center border-r border-[#e2e1df]">Average: ; Sum: 0</div>
        <div className="w-[95px] justify-between border-r border-[#e2e1df] pr-1 pl-1.5">
          <button type="button" aria-label="Zoom out" className="flex">
            <svg viewBox="0 0 7 7" className="size-[7px]">
              <path d="M0 3.5h7" stroke="#222" strokeWidth="1.5" />
            </svg>
          </button>
          <input
            type="range"
            aria-label="Zoom"
            defaultValue={50}
            className="h-px w-16 appearance-none bg-[#8f8f8f] [&::-webkit-slider-thumb]:h-[7px] [&::-webkit-slider-thumb]:w-[3px] [&::-webkit-slider-thumb]:appearance-none [&::-webkit-slider-thumb]:border [&::-webkit-slider-thumb]:border-[#555] [&::-webkit-slider-thumb]:bg-white"
          />
          <button type="button" aria-label="Zoom in" className="flex">
            <svg viewBox="0 0 7 7" className="size-[7px]">
              <path d="M0 3.5h7M3.5 0v7" stroke="#222" strokeWidth="1.5" />
            </svg>
          </button>
        </div>
        <div className="w-[33px] justify-center">100%</div>
      </footer>
    </div>
  );
}
